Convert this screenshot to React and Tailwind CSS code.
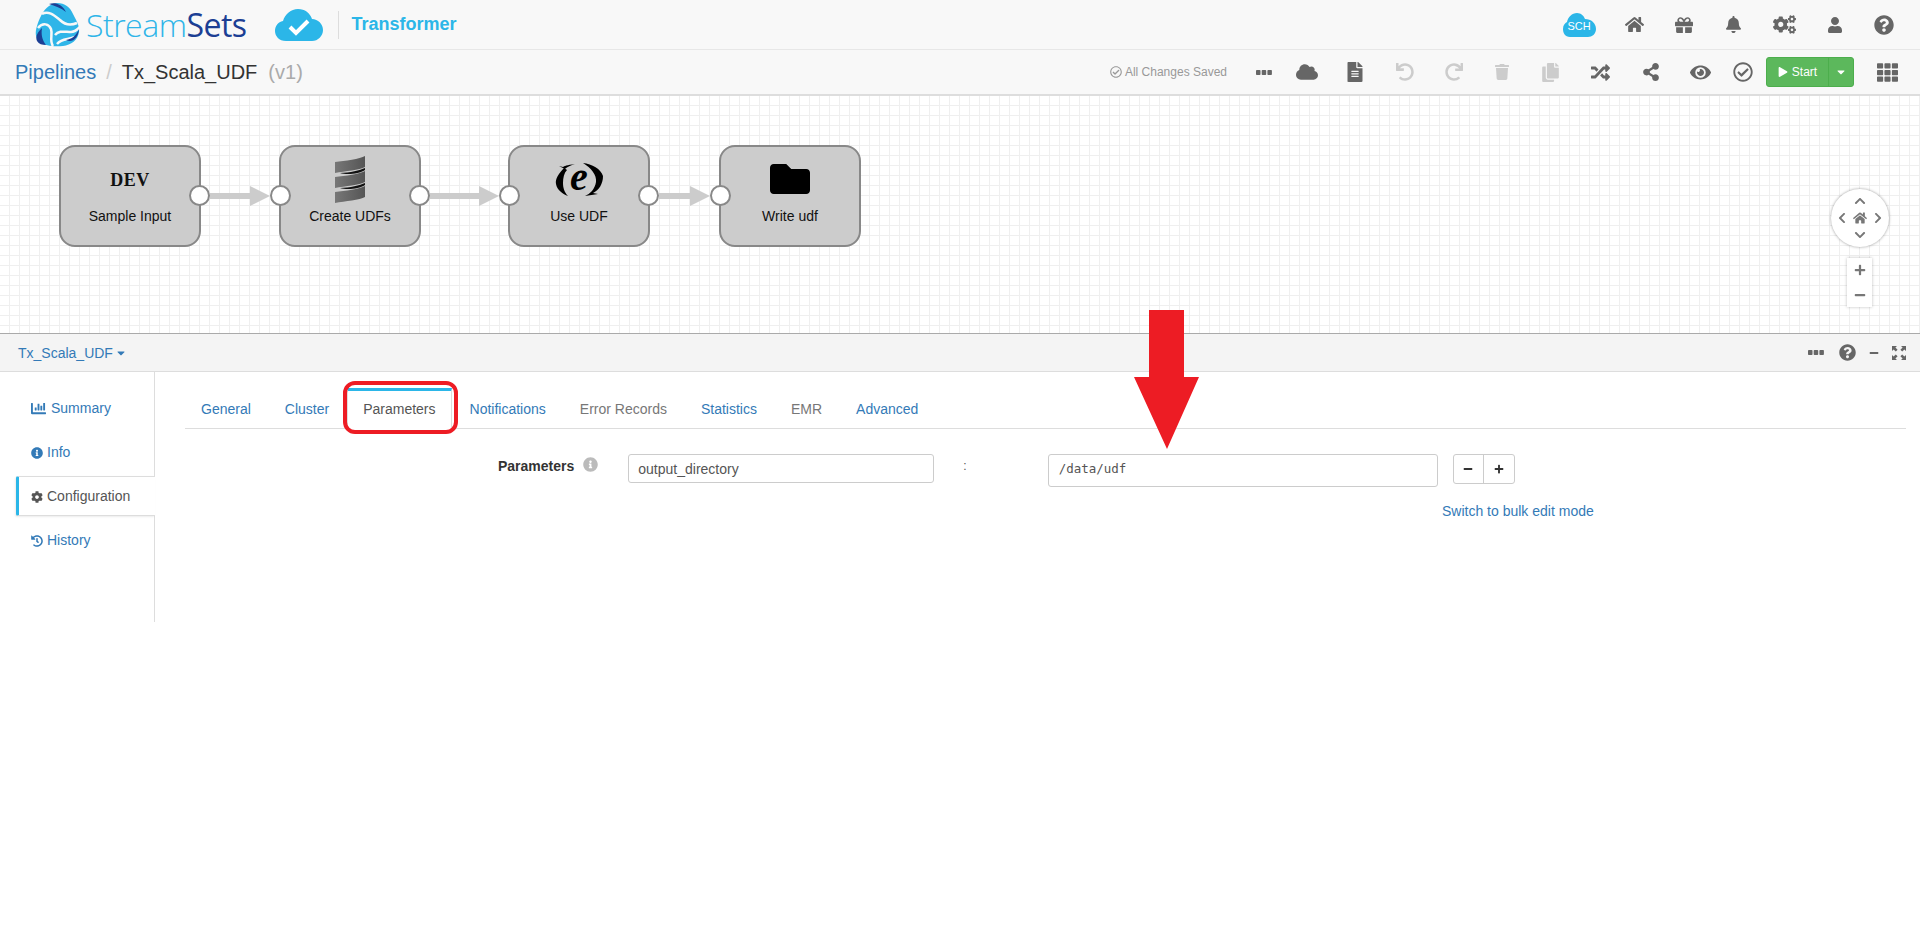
import React from "react";
import {
  FaBell,
  FaCaretDown,
  FaChartBar,
  FaChevronDown,
  FaChevronLeft,
  FaChevronRight,
  FaChevronUp,
  FaCloud,
  FaCog,
  FaCogs,
  FaCopy,
  FaEye,
  FaFileAlt,
  FaFolder,
  FaGift,
  FaHistory,
  FaHome,
  FaInfoCircle,
  FaMinus,
  FaPlay,
  FaPlus,
  FaQuestionCircle,
  FaRandom,
  FaRedo,
  FaRegCheckCircle,
  FaShareAlt,
  FaTh,
  FaTrash,
  FaUndo,
  FaUser,
} from "react-icons/fa";

function Logo() {
  return (
    <svg width="45" height="45" viewBox="0 0 45 45" className="flex-none">
      <path
        fill="#2fb5e8"
        d="M22 1C30 1 35 5 38 12C41 18 45 24 44 30C43 38 36 43 28 44C20 45 10 44 5 40C0 36 0 30 2 24C4 17 8 8 14 4C17 2 20 1 22 1Z"
      />
      <g fill="none" stroke="#f8f8f8" strokeWidth="2.5">
        <path d="M7 12C14 8 20 14 25 18C29 22 35 24 42 21" />
        <path d="M3 26C8 20 14 22 16 27C18 33 14 38 18 44" />
        <path d="M20 33C24 28 30 30 36 30C39 30 42 28 45 25" />
        <path d="M22 42C27 36 32 38 40 35" />
      </g>
      <path fill="#1c3f94" d="M14 2C20 0 27 2 31 10C26 6 20 4 14 2Z" />
      <path fill="#1c3f94" d="M7 26C3 30 0 34 2 39C4 42 7 43 11 43C7 38 6 32 7 26Z" />
      <path fill="#1c3f94" d="M44 27C41 34 37 37 31 38C37 41 43 37 44 27Z" />
    </svg>
  );
}

function CloudCheck() {
  return (
    <svg width="48" height="32" viewBox="0 0 48 32" className="flex-none">
      <path
        fill="#2bb6e8"
        d="M11 32C4 32 0 27 0 22C0 17 3 13 8 12C10 5 16 0 23 0C30 0 35 4 37 10C43 10 48 15 48 21C48 27 43 32 37 32Z"
      />
      <path fill="none" stroke="#fff" strokeWidth="4" d="M15 18L21 24L33 12" />
    </svg>
  );
}

function SchCloud() {
  return (
    <div className="relative flex h-[24px] w-[33px] items-center justify-center">
      <svg width="33" height="24" viewBox="0 0 33 24" className="absolute inset-0">
        <path
          fill="#2bb6e8"
          d="M7 24C2 24 0 20 0 16C0 12 2 10 4 9C5 4 9 0 14 0C18 0 21 3 22 6C28 6 33 10 33 16C33 21 29 24 25 24Z"
        />
      </svg>
      <span className="relative mt-[4px] text-[11px] text-white">SCH</span>
    </div>
  );
}

function Dots() {
  return (
    <svg width="16" height="5" viewBox="0 0 16 5" fill="currentColor">
      <rect x="0" y="0" width="4.5" height="5" rx="0.8" />
      <rect x="5.7" y="0" width="4.5" height="5" rx="0.8" />
      <rect x="11.4" y="0" width="4.5" height="5" rx="0.8" />
    </svg>
  );
}

function ScalaIcon() {
  const sheet = "M0 6C10 5 25 3 30 0L30 11C25 14 10 15 0 17Z";
  return (
    <svg width="30" height="47" viewBox="0 0 30 47" className="flex-none">
      <defs>
        <linearGradient id="sheet" x1="0" x2="1" y1="0" y2="0">
          <stop offset="0" stopColor="#777" />
          <stop offset="1" stopColor="#555" />
        </linearGradient>
      </defs>
      <path fill="url(#sheet)" d={sheet} />
      <path fill="url(#sheet)" d={sheet} transform="translate(0 15)" />
      <path fill="url(#sheet)" d={sheet} transform="translate(0 30)" />
      <path fill="#111" d="M5 17C15 17 25 14 30 12L30 14C24 18 12 19 5 17Z" />
      <path fill="#111" d="M5 32C15 32 25 29 30 27L30 29C24 33 12 34 5 32Z" />
    </svg>
  );
}

function ExpressionIcon() {
  return (
    <div className="relative flex h-[33px] w-[48px] items-center justify-center">
      <svg width="48" height="33" viewBox="0 0 48 33" className="absolute inset-0">
        <path d="M4 3L10 6C12 4 16 2 20 1C12 2 9 3 8 4ZM9 5C4 10 0 16 1 21C2 27 8 31 13 33C9 29 8 24 8 20C8 15 9 10 12 7Z" fill="#000" />
        <path d="M28 0C37 1 46 6 48 13C48 21 44 27 38 30L43 31L30 33C35 31 40 26 41 19C42 12 36 5 28 0Z" fill="#000" />
      </svg>
      <span className="relative mb-[4px] font-['Liberation_Serif'] text-[40px] font-bold italic leading-none text-black">
        e
      </span>
    </div>
  );
}

function Node({ left, label, ports, children }) {
  return (
    <div
      style={{ left }}
      className="absolute top-[49px] flex h-[102px] w-[142px] flex-col items-center rounded-[16px] border-2 border-[#888] bg-[#ccc]"
    >
      <div className="flex h-[64px] items-center justify-center">{children}</div>
      <span className="mt-[-5px] text-[14px] leading-[20px] text-[#111]">{label}</span>
      {ports.includes("in") && (
        <span className="absolute top-[38px] left-[-11px] h-[21px] w-[21px] rounded-full border-2 border-[#888] bg-white" />
      )}
      {ports.includes("out") && (
        <span className="absolute top-[38px] right-[-11px] h-[21px] w-[21px] rounded-full border-2 border-[#888] bg-white" />
      )}
    </div>
  );
}

function Edge({ left, width }) {
  return (
    <div style={{ left, width }} className="absolute top-[90px] flex h-[20px] items-center">
      <div className="h-[6px] flex-1 bg-[#ccc]" />
      <div className="h-0 w-0 border-y-[10px] border-l-[20px] border-y-transparent border-l-[#ccc]" />
    </div>
  );
}

function Slot({ width = 49, children, className = "text-[#666]" }) {
  return (
    <div style={{ width }} className={`flex flex-none items-center justify-center ${className}`}>
      {children}
    </div>
  );
}

const tabs = [
  { name: "General" },
  { name: "Cluster" },
  { name: "Parameters", active: true },
  { name: "Notifications" },
  { name: "Error Records", muted: true },
  { name: "Statistics" },
  { name: "EMR", muted: true },
  { name: "Advanced" },
];

function SideItem({ icon, label, gap = "gap-[4px]" }) {
  return (
    <div className={`flex h-[44px] items-center pl-[31px] pt-[1px] text-[14px] text-[#337ab7] ${gap}`}>
      {icon}
      <span>{label}</span>
    </div>
  );
}

export default function App() {
  return (
    <div className="relative flex h-[951px] w-full flex-col overflow-hidden bg-white font-['Liberation_Sans',sans-serif]">
      {/* Header */}
      <div className="flex h-[50px] flex-none items-center border-b border-[#e7e7e7] bg-[#f8f8f8] pl-[35px] pr-[11px]">
        <Logo />
        <span className="ml-[6px] font-['Open_Sans',sans-serif] text-[32px] leading-none font-light tracking-[-0.5px] text-[#2fb5e8]">
          Stream<span className="font-normal text-[#1c3f94]">Sets</span>
        </span>
        <div className="ml-[28px]">
          <CloudCheck />
        </div>
        <div className="ml-[15px] h-[28px] w-px bg-[#ddd]" />
        <span className="ml-[13px] text-[18px] font-bold text-[#2bb6e8]">Transformer</span>
        <div className="ml-auto flex items-center">
          <Slot width={60} className="text-[#666]">
            <SchCloud />
          </Slot>
          <Slot width={50}><FaHome size={19} /></Slot>
          <Slot width={49}><FaGift size={18} /></Slot>
          <Slot width={50}><FaBell size={17} /></Slot>
          <Slot width={52}><FaCogs size={23} /></Slot>
          <Slot width={49}><FaUser size={16} /></Slot>
          <Slot width={50}><FaQuestionCircle size={20} /></Slot>
        </div>
      </div>

      {/* Toolbar */}
      <div className="flex h-[46px] flex-none items-center border-b-2 border-[#ddd] bg-[#f8f8f8] pl-[15px]">
        <span className="text-[20px] text-[#337ab7]">Pipelines</span>
        <span className="ml-[10px] text-[20px] text-[#ccc]">/</span>
        <span className="ml-[10px] text-[20px] text-[#333]">Tx_Scala_UDF</span>
        <span className="ml-[11px] text-[20px] text-[#aaa]">(v1)</span>
        <div className="ml-auto flex items-center gap-[3px] text-[12px] text-[#999]">
          <FaRegCheckCircle size={12} />
          <span>All Changes Saved</span>
        </div>
        <div className="ml-[17px] flex items-center">
          <Slot width={40}><Dots /></Slot>
          <Slot width={45}><FaCloud size={22} /></Slot>
          <Slot width={51}><FaFileAlt size={20} /></Slot>
          <Slot width={49} className="text-[#ccc]"><FaUndo size={18} /></Slot>
          <Slot width={49} className="text-[#ccc]"><FaRedo size={18} /></Slot>
          <Slot width={48} className="text-[#ccc]"><FaTrash size={16} /></Slot>
          <Slot width={48} className="text-[#ccc]"><FaCopy size={19} /></Slot>
          <Slot width={52}><FaRandom size={19} /></Slot>
          <Slot width={50}><FaShareAlt size={18} /></Slot>
          <Slot width={49}><FaEye size={21} /></Slot>
          <Slot width={36}><FaRegCheckCircle size={20} /></Slot>
        </div>
        <div className="ml-[5px] flex h-[30px] w-[88px] flex-none items-center rounded-[3px] border border-[#4cae4c] bg-[#5cb85c] text-white">
          <div className="flex h-full flex-1 items-center justify-center gap-[4px] border-r border-[#4cae4c] text-[12px]">
            <FaPlay size={10} />
            <span>Start</span>
          </div>
          <div className="flex w-[24px] items-center justify-center">
            <FaCaretDown size={12} />
          </div>
        </div>
        <Slot width={66}><FaTh size={21} /></Slot>
      </div>

      {/* Canvas */}
      <div className="relative h-[238px] flex-none border-b border-[#aaa] bg-white bg-[linear-gradient(to_right,transparent_9px,#efefef_9px),linear-gradient(to_bottom,transparent_9px,#efefef_9px)] bg-[size:10px_10px]">
        <Edge left={210} width={60} />
        <Edge left={430} width={69} />
        <Edge left={659} width={51} />
        <Node left={59} label="Sample Input" ports={["out"]}>
          <span className="mt-[2px] font-['Liberation_Serif',serif] text-[18px] font-bold tracking-[0.5px] text-[#111]">DEV</span>
        </Node>
        <Node left={279} label="Create UDFs" ports={["in", "out"]}>
          <ScalaIcon />
        </Node>
        <Node left={508} label="Use UDF" ports={["in", "out"]}>
          <ExpressionIcon />
        </Node>
        <Node left={719} label="Write udf" ports={["in"]}>
          <FaFolder size={40} className="text-black" />
        </Node>

        {/* Pan and zoom */}
        <div className="absolute top-[93px] left-[1831px] h-[58px] w-[58px] rounded-full bg-white text-[#777] shadow-[0_0_3px_rgba(0,0,0,0.4)]">
          <FaChevronUp size={12} className="absolute top-[6px] left-[23px]" />
          <FaChevronDown size={12} className="absolute bottom-[6px] left-[23px]" />
          <FaChevronLeft size={12} className="absolute top-[23px] left-[5px]" />
          <FaChevronRight size={12} className="absolute top-[23px] right-[5px]" />
          <FaHome size={14} className="absolute top-[22px] left-[22px]" />
        </div>
        <div className="absolute top-[162px] left-[1847px] flex h-[49px] w-[25px] flex-col items-center justify-center gap-[13px] bg-white text-[#777] shadow-[0_0_3px_rgba(0,0,0,0.25)]">
          <FaPlus size={12} />
          <FaMinus size={12} />
        </div>
      </div>

      {/* Detail pane header */}
      <div className="flex h-[38px] flex-none items-center border-b border-[#ddd] bg-[#f4f4f4] pl-[18px] pr-[14px]">
        <span className="pt-[1px] text-[14px] text-[#337ab7]">Tx_Scala_UDF</span>
        <FaCaretDown size={12} className="ml-[2px] text-[#337ab7]" />
        <div className="ml-auto flex items-center text-[#666]">
          <Dots />
          <FaQuestionCircle size={17} className="ml-[15px]" />
          <FaMinus size={10} className="ml-[13px]" />
          <svg width="14" height="14" viewBox="0 0 14 14" fill="currentColor" className="ml-[13px]">
            <path d="M0 0H5L3.4 1.6L5.6 3.8L3.8 5.6L1.6 3.4L0 5Z" />
            <path d="M14 0V5L12.4 3.4L10.2 5.6L8.4 3.8L10.6 1.6L9 0Z" />
            <path d="M0 14V9L1.6 10.6L3.8 8.4L5.6 10.2L3.4 12.4L5 14Z" />
            <path d="M14 14H9L10.6 12.4L8.4 10.2L10.2 8.4L12.4 10.6L14 9Z" />
          </svg>
        </div>
      </div>

      {/* Detail pane body */}
      <div className="flex h-[250px] flex-none">
        <div className="w-[155px] flex-none border-r border-[#ddd] pt-[14px]">
          <SideItem icon={<FaChartBar size={15} />} label="Summary" gap="gap-[5px]" />
          <SideItem icon={<FaInfoCircle size={12} />} label="Info" />
          <div className="relative z-10 my-[2px] ml-[16px] mr-[-1px] flex h-[40px] items-center gap-[4px] rounded-l-[2px] border-y border-l-[3px] border-y-[#ddd] border-l-[#2bb6e8] bg-white pl-[12px] pt-[1px] text-[14px] text-[#555] shadow-[-1px_1px_2px_rgba(0,0,0,0.08)]">
            <FaCog size={12} />
            <span>Configuration</span>
          </div>
          <SideItem icon={<FaHistory size={12} />} label="History" />
        </div>

        <div className="flex-1 pl-[30px] pr-[14px] pt-[16px]">
          <div className="flex h-[41px] items-stretch border-b border-[#ddd] text-[14px]">
            {tabs.map((tab) =>
              tab.active ? (
                <div
                  key={tab.name}
                  className="mr-[2px] flex h-[41px] items-center border-x border-t-[3px] border-x-[#ddd] border-t-[#2bb6e8] bg-white px-[15px] pb-[1px] text-[#555]"
                >
                  {tab.name}
                </div>
              ) : (
                <div
                  key={tab.name}
                  className={`mr-[2px] flex items-center border border-transparent px-[15px] pt-[2px] ${tab.muted ? "text-[#777]" : "text-[#337ab7]"}`}
                >
                  {tab.name}
                </div>
              )
            )}
          </div>

          <div className="mt-[25px] flex items-start text-[14px]">
            <span className="ml-[313px] mt-[2px] text-[14px] font-bold text-[#333]">Parameters</span>
            <FaInfoCircle size={15} className="ml-[9px] mt-[3px] flex-none text-[#bbb]" />
            <div className="ml-[30px] flex h-[29px] w-[306px] flex-none items-center rounded-[3px] border border-[#ccc] pl-[9px] pt-[2px] text-[#555]">
              output_directory
            </div>
            <span className="ml-[29px] mt-[2px] text-[12px] leading-[20px] text-[#555]">:</span>
            <div className="ml-[81px] flex h-[33px] w-[390px] flex-none items-center rounded-[3px] border border-[#ccc] pb-[3px] pl-[10px] font-['DejaVu_Sans_Mono',monospace] text-[12.5px] text-[#555]">
              /data/udf
            </div>
            <div className="ml-[15px] flex h-[30px] w-[62px] flex-none rounded-[3px] border border-[#ccc] text-[#333]">
              <div className="flex flex-1 items-center justify-center border-r border-[#ccc]">
                <FaMinus size={10} />
              </div>
              <div className="flex flex-1 items-center justify-center">
                <FaPlus size={10} />
              </div>
            </div>
          </div>
          <div className="ml-[1257px] mt-[14px] text-[14px] leading-[20px] whitespace-nowrap text-[#337ab7]">
            Switch to bulk edit mode
          </div>
        </div>
      </div>

      {/* Annotations drawn over the screenshot */}
      <div className="absolute top-[381px] left-[343px] h-[53px] w-[115px] rounded-[12px] border-4 border-[#ed1c24]" />
      <svg width="66" height="140" viewBox="0 0 66 140" className="absolute top-[310px] left-[1134px]">
        <path fill="#ed1c24" d="M15 0H50V67H65L33 139L0 67H15Z" />
      </svg>
    </div>
  );
}
